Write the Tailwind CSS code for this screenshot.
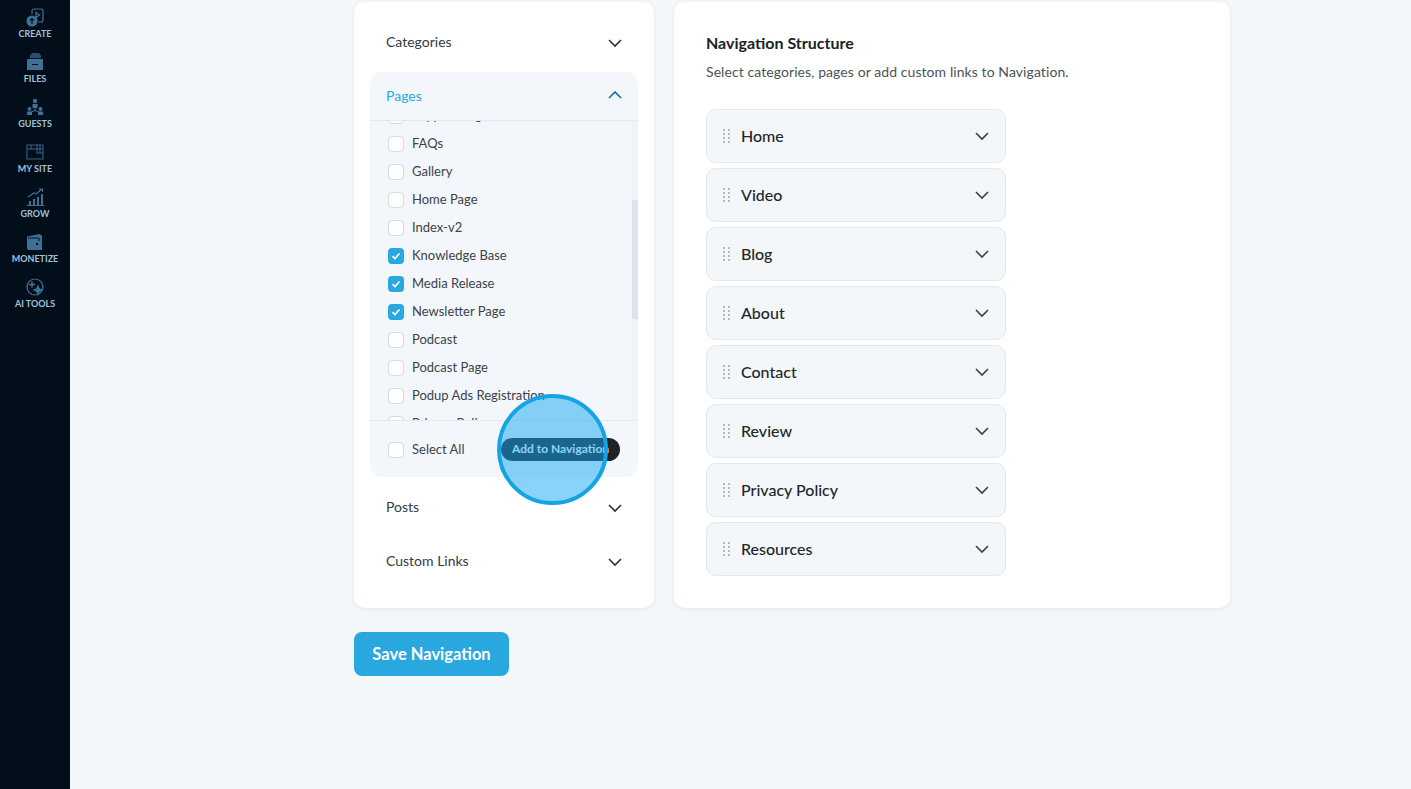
<!DOCTYPE html>
<html lang="en">
<head>
    <meta charset="UTF-8">
    <title>Navigation</title>
    <script src="https://cdn.jsdelivr.net/npm/@tailwindcss/browser@4"></script>
</head>
<body class="bg-[#f3f7fa] font-['Lato',sans-serif] h-[789px] overflow-hidden relative">

<div class="flex h-[789px]">
    <!-- Sidebar -->
    <aside class="w-[70px] shrink-0 bg-[#020f1b] flex flex-col items-center pt-[7px] gap-[19px] text-[#9fc1d8] text-[9px] font-bold leading-[12px]">
        <div class="flex flex-col items-center h-[26px]">
            <svg class="shrink-0" width="20" height="20" viewBox="0 0 20 20" fill="none" stroke="#3f7196" stroke-width="1.200"><path d="M7 7V4a2 2 0 0 1 2-2h7a2 2 0 0 1 2 2v9a2 2 0 0 1-2 2h-3"/><path d="M11 5.500l3.500 2.500-3.500 2.500z"/><circle cx="7" cy="14" r="5" fill="#3f7196"/><path d="M7 17v-5M5 13.500l2-2 2 2" stroke="#020f1b"/></svg>
            <span class="mt-[1px]">CREATE</span>
        </div>
        <div class="flex flex-col items-center h-[26px]">
            <svg class="shrink-0" width="20" height="20" viewBox="0 0 20 20" fill="#3f7196"><path d="M5 6V3.500L7 1h7l2 2.500V6z" opacity=".65"/><path d="M3 7h14a1 1 0 0 1 1 1v10H2V8a1 1 0 0 1 1-1z"/><path d="M7 12h6v1H7z" fill="#020f1b"/></svg>
            <span class="mt-[1px]">FILES</span>
        </div>
        <div class="flex flex-col items-center h-[26px]">
            <svg class="shrink-0" width="20" height="20" viewBox="0 0 20 20" fill="#3f7196"><circle cx="10" cy="4" r="2.200"/><path d="M7.500 7h5v4h-5z"/><circle cx="4.500" cy="12" r="1.900"/><circle cx="15.500" cy="12" r="1.900"/><path d="M2 14.500h5V18H2zM13 14.500h5V18h-5z"/><path d="M10 11v3M6.500 15l3.500-1.500 3.500 1.500" fill="none" stroke="#3f7196"/></svg>
            <span class="mt-[1px]">GUESTS</span>
        </div>
        <div class="flex flex-col items-center h-[26px]">
            <svg class="shrink-0" width="20" height="20" viewBox="0 0 20 20" fill="none" stroke="#345f80" stroke-width="1.100"><path d="M2 3h16v14H2zM2 7h12M6 3v4M12 3v8h6M15 3v8M12 7h6"/></svg>
            <span class="mt-[1px]">MY SITE</span>
        </div>
        <div class="flex flex-col items-center h-[26px]">
            <svg class="shrink-0" width="20" height="20" viewBox="0 0 20 20" fill="#3f7196"><path d="M4 14h2v4H4zM8 12h2v6H8zM12 10h2v8h-2zM16 7h2v11h-2z"/><path d="M3 10l6-4 2 1 6-5M14 2h3.500v3" fill="none" stroke="#3f7196" stroke-width="1.100"/><path d="M1.500 18.500h18" stroke="#3f7196"/></svg>
            <span class="mt-[1px]">GROW</span>
        </div>
        <div class="flex flex-col items-center h-[26px]">
            <svg class="shrink-0" width="20" height="20" viewBox="0 0 20 20" fill="#3f7196"><path d="M2 4.500L15 2l2 2v14H4a2 2 0 0 1-2-2z"/><path d="M3 6h11v3" fill="none" stroke="#020f1b"/><circle cx="12" cy="12" r="1.200" fill="#020f1b"/></svg>
            <span class="mt-[1px]">MONETIZE</span>
        </div>
        <div class="flex flex-col items-center h-[26px]">
            <svg class="shrink-0" width="20" height="20" viewBox="0 0 20 20" fill="none" stroke="#3f7196" stroke-width="1.200"><circle cx="10" cy="10" r="8"/><path d="M7 4.500v6M4 7.500h6" stroke-width="1.500"/><path d="M13 9l1.200 2.800 2.800 1.200-2.800 1.200L13 17l-1.200-2.800L9 13l2.800-1.200z" fill="#3f7196"/></svg>
            <span class="mt-[1px]">AI TOOLS</span>
        </div>
    </aside>

    <!-- Main -->
    <main class="flex-1 pl-[284px] pt-[2px]">
        <div class="flex gap-[20px] items-start">
            <!-- Left card -->
            <section class="w-[300px] h-[606px] bg-white rounded-[10px] shadow-[0_1px_4px_rgba(0,0,0,0.08)] px-[16px] text-[#333b42] text-[14px]">
                <div class="h-[70px] pt-[9px] pl-[16px] pr-[15px] flex items-center justify-between">
                    <span>Categories</span>
                    <svg class="mt-[2px]" width="16" height="16" viewBox="0 0 16 16" fill="none" stroke="#2b3338" stroke-width="1.600"><path d="M2 5l6 6 6-6"/></svg>
                </div>
                <div class="bg-[#f3f7fb] rounded-[12px] h-[405px] flex flex-col">
                    <div class="h-[49px] shrink-0 pb-[2px] pl-[16px] pr-[15px] flex items-center justify-between text-[#29a8e0] border-b border-[#e3e9ee]">
                        <span>Pages</span>
                        <svg width="16" height="16" viewBox="0 0 16 16" fill="none" stroke="#1f6f9e" stroke-width="1.600"><path d="M2 11l6-6 6 6"/></svg>
                    </div>
                    <div class="relative h-[300px] shrink-0 overflow-hidden border-b border-[#e3e9ee] text-[13px] text-[#3b434a]">
                        <ul class="-mt-[19px] pl-[18px]">
                            <li class="h-[28px] flex items-center gap-[8px]"><span class="w-[16px] h-[16px] rounded-[4px] bg-white border border-[#d5dae0]"></span>Support Page</li>
                            <li class="h-[28px] flex items-center gap-[8px]"><span class="w-[16px] h-[16px] rounded-[4px] bg-white border border-[#d5dae0]"></span>FAQs</li>
                            <li class="h-[28px] flex items-center gap-[8px]"><span class="w-[16px] h-[16px] rounded-[4px] bg-white border border-[#d5dae0]"></span>Gallery</li>
                            <li class="h-[28px] flex items-center gap-[8px]"><span class="w-[16px] h-[16px] rounded-[4px] bg-white border border-[#d5dae0]"></span>Home Page</li>
                            <li class="h-[28px] flex items-center gap-[8px]"><span class="w-[16px] h-[16px] rounded-[4px] bg-white border border-[#d5dae0]"></span>Index-v2</li>
                            <li class="h-[28px] flex items-center gap-[8px]"><span class="w-[16px] h-[16px] rounded-[4px] bg-[#29a8e0] flex items-center justify-center"><svg width="10" height="10" viewBox="0 0 10 10" fill="none" stroke="white" stroke-width="1.600"><path d="M1.500 5.200l2.400 2.300 4.600-5"/></svg></span>Knowledge Base</li>
                            <li class="h-[28px] flex items-center gap-[8px]"><span class="w-[16px] h-[16px] rounded-[4px] bg-[#29a8e0] flex items-center justify-center"><svg width="10" height="10" viewBox="0 0 10 10" fill="none" stroke="white" stroke-width="1.600"><path d="M1.500 5.200l2.400 2.300 4.600-5"/></svg></span>Media Release</li>
                            <li class="h-[28px] flex items-center gap-[8px]"><span class="w-[16px] h-[16px] rounded-[4px] bg-[#29a8e0] flex items-center justify-center"><svg width="10" height="10" viewBox="0 0 10 10" fill="none" stroke="white" stroke-width="1.600"><path d="M1.500 5.200l2.400 2.300 4.600-5"/></svg></span>Newsletter Page</li>
                            <li class="h-[28px] flex items-center gap-[8px]"><span class="w-[16px] h-[16px] rounded-[4px] bg-white border border-[#d5dae0]"></span>Podcast</li>
                            <li class="h-[28px] flex items-center gap-[8px]"><span class="w-[16px] h-[16px] rounded-[4px] bg-white border border-[#d5dae0]"></span>Podcast Page</li>
                            <li class="h-[28px] flex items-center gap-[8px]"><span class="w-[16px] h-[16px] rounded-[4px] bg-white border border-[#d5dae0]"></span>Podup Ads Registration</li>
                            <li class="h-[28px] flex items-center gap-[8px]"><span class="w-[16px] h-[16px] rounded-[4px] bg-white border border-[#d5dae0]"></span>Privacy Policy</li>
                        </ul>
                        <!-- scrollbar -->
                        <div class="absolute right-0 top-0 bottom-0 w-[6px] bg-[#f0f4fa]">
                            <div class="mt-[79px] h-[119px] bg-[#dde2ee]"></div>
                        </div>
                    </div>
                    <div class="flex-1 pl-[18px] pr-[18px] flex items-center justify-between text-[13px] text-[#3b434a]">
                        <label class="flex items-center gap-[8px] mt-[1px]"><span class="w-[16px] h-[16px] rounded-[4px] bg-white border border-[#d5dae0]"></span>Select All</label>
                        <button class="w-[119px] h-[23px] rounded-full bg-[#1d2327] text-white text-[12px] font-bold text-left pl-[11px] whitespace-nowrap">Add to Navigation</button>
                    </div>
                </div>
                <div class="h-[54px] pt-[4px] pl-[16px] pr-[15px] flex items-center justify-between">
                    <span>Posts</span>
                    <svg class="mt-[4px]" width="16" height="16" viewBox="0 0 16 16" fill="none" stroke="#2b3338" stroke-width="1.600"><path d="M2 5l6 6 6-6"/></svg>
                </div>
                <div class="h-[54px] pt-[4px] pl-[16px] pr-[15px] flex items-center justify-between">
                    <span>Custom Links</span>
                    <svg class="mt-[4px]" width="16" height="16" viewBox="0 0 16 16" fill="none" stroke="#2b3338" stroke-width="1.600"><path d="M2 5l6 6 6-6"/></svg>
                </div>
            </section>

            <!-- Right card -->
            <section class="w-[556px] h-[606px] bg-white rounded-[10px] shadow-[0_1px_4px_rgba(0,0,0,0.08)] pl-[32px] pt-[31px]">
                <h2 class="text-[16px] font-bold text-[#1b2226] leading-[20px]">Navigation Structure</h2>
                <p class="mt-[9px] text-[14px] tracking-[0.08px] text-[#4a5359] leading-[20px]">Select categories, pages or add custom links to Navigation.</p>
                <div class="mt-[27px] w-[300px] flex flex-col gap-[5px]">
                    <div class="h-[54px] bg-[#f3f7fa] border border-[#e2e7ec] rounded-[10px] flex items-center pl-[16px] pr-[15px] text-[16px] text-[#1f262b] font-medium">
                        <svg width="8" height="14" viewBox="0 0 8 14" fill="#b3b9be" class="mr-[10px]"><path d="M0 0h2v2H0zM5 0h2v2H5zM0 4h2v2H0zM5 4h2v2H5zM0 8h2v2H0zM5 8h2v2H5zM0 12h2v2H0zM5 12h2v2H5z"/></svg>
                        <span class="flex-1">Home</span>
                        <svg width="16" height="16" viewBox="0 0 16 16" fill="none" stroke="#3a4248" stroke-width="1.600"><path d="M2 5l6 6 6-6"/></svg>
                    </div>
                    <div class="h-[54px] bg-[#f3f7fa] border border-[#e2e7ec] rounded-[10px] flex items-center pl-[16px] pr-[15px] text-[16px] text-[#1f262b] font-medium">
                        <svg width="8" height="14" viewBox="0 0 8 14" fill="#b3b9be" class="mr-[10px]"><path d="M0 0h2v2H0zM5 0h2v2H5zM0 4h2v2H0zM5 4h2v2H5zM0 8h2v2H0zM5 8h2v2H5zM0 12h2v2H0zM5 12h2v2H5z"/></svg>
                        <span class="flex-1">Video</span>
                        <svg width="16" height="16" viewBox="0 0 16 16" fill="none" stroke="#3a4248" stroke-width="1.600"><path d="M2 5l6 6 6-6"/></svg>
                    </div>
                    <div class="h-[54px] bg-[#f3f7fa] border border-[#e2e7ec] rounded-[10px] flex items-center pl-[16px] pr-[15px] text-[16px] text-[#1f262b] font-medium">
                        <svg width="8" height="14" viewBox="0 0 8 14" fill="#b3b9be" class="mr-[10px]"><path d="M0 0h2v2H0zM5 0h2v2H5zM0 4h2v2H0zM5 4h2v2H5zM0 8h2v2H0zM5 8h2v2H5zM0 12h2v2H0zM5 12h2v2H5z"/></svg>
                        <span class="flex-1">Blog</span>
                        <svg width="16" height="16" viewBox="0 0 16 16" fill="none" stroke="#3a4248" stroke-width="1.600"><path d="M2 5l6 6 6-6"/></svg>
                    </div>
                    <div class="h-[54px] bg-[#f3f7fa] border border-[#e2e7ec] rounded-[10px] flex items-center pl-[16px] pr-[15px] text-[16px] text-[#1f262b] font-medium">
                        <svg width="8" height="14" viewBox="0 0 8 14" fill="#b3b9be" class="mr-[10px]"><path d="M0 0h2v2H0zM5 0h2v2H5zM0 4h2v2H0zM5 4h2v2H5zM0 8h2v2H0zM5 8h2v2H5zM0 12h2v2H0zM5 12h2v2H5z"/></svg>
                        <span class="flex-1">About</span>
                        <svg width="16" height="16" viewBox="0 0 16 16" fill="none" stroke="#3a4248" stroke-width="1.600"><path d="M2 5l6 6 6-6"/></svg>
                    </div>
                    <div class="h-[54px] bg-[#f3f7fa] border border-[#e2e7ec] rounded-[10px] flex items-center pl-[16px] pr-[15px] text-[16px] text-[#1f262b] font-medium">
                        <svg width="8" height="14" viewBox="0 0 8 14" fill="#b3b9be" class="mr-[10px]"><path d="M0 0h2v2H0zM5 0h2v2H5zM0 4h2v2H0zM5 4h2v2H5zM0 8h2v2H0zM5 8h2v2H5zM0 12h2v2H0zM5 12h2v2H5z"/></svg>
                        <span class="flex-1">Contact</span>
                        <svg width="16" height="16" viewBox="0 0 16 16" fill="none" stroke="#3a4248" stroke-width="1.600"><path d="M2 5l6 6 6-6"/></svg>
                    </div>
                    <div class="h-[54px] bg-[#f3f7fa] border border-[#e2e7ec] rounded-[10px] flex items-center pl-[16px] pr-[15px] text-[16px] text-[#1f262b] font-medium">
                        <svg width="8" height="14" viewBox="0 0 8 14" fill="#b3b9be" class="mr-[10px]"><path d="M0 0h2v2H0zM5 0h2v2H5zM0 4h2v2H0zM5 4h2v2H5zM0 8h2v2H0zM5 8h2v2H5zM0 12h2v2H0zM5 12h2v2H5z"/></svg>
                        <span class="flex-1">Review</span>
                        <svg width="16" height="16" viewBox="0 0 16 16" fill="none" stroke="#3a4248" stroke-width="1.600"><path d="M2 5l6 6 6-6"/></svg>
                    </div>
                    <div class="h-[54px] bg-[#f3f7fa] border border-[#e2e7ec] rounded-[10px] flex items-center pl-[16px] pr-[15px] text-[16px] text-[#1f262b] font-medium">
                        <svg width="8" height="14" viewBox="0 0 8 14" fill="#b3b9be" class="mr-[10px]"><path d="M0 0h2v2H0zM5 0h2v2H5zM0 4h2v2H0zM5 4h2v2H5zM0 8h2v2H0zM5 8h2v2H5zM0 12h2v2H0zM5 12h2v2H5z"/></svg>
                        <span class="flex-1">Privacy Policy</span>
                        <svg width="16" height="16" viewBox="0 0 16 16" fill="none" stroke="#3a4248" stroke-width="1.600"><path d="M2 5l6 6 6-6"/></svg>
                    </div>
                    <div class="h-[54px] bg-[#f3f7fa] border border-[#e2e7ec] rounded-[10px] flex items-center pl-[16px] pr-[15px] text-[16px] text-[#1f262b] font-medium">
                        <svg width="8" height="14" viewBox="0 0 8 14" fill="#b3b9be" class="mr-[10px]"><path d="M0 0h2v2H0zM5 0h2v2H5zM0 4h2v2H0zM5 4h2v2H5zM0 8h2v2H0zM5 8h2v2H5zM0 12h2v2H0zM5 12h2v2H5z"/></svg>
                        <span class="flex-1">Resources</span>
                        <svg width="16" height="16" viewBox="0 0 16 16" fill="none" stroke="#3a4248" stroke-width="1.600"><path d="M2 5l6 6 6-6"/></svg>
                    </div>
                </div>
            </section>
        </div>
        <button class="mt-[24px] w-[155px] h-[44px] bg-[#29a8e0] text-white rounded-[8px] text-[16.5px] font-bold pt-[1px]">Save Navigation</button>
    </main>
</div>

<!-- Click highlight -->
<div class="absolute left-[497px] top-[394px] w-[111px] h-[111px] rounded-full bg-[#16a7f1]/50 border-[4px] border-[#14a3e4]"></div>

</body>
</html>
